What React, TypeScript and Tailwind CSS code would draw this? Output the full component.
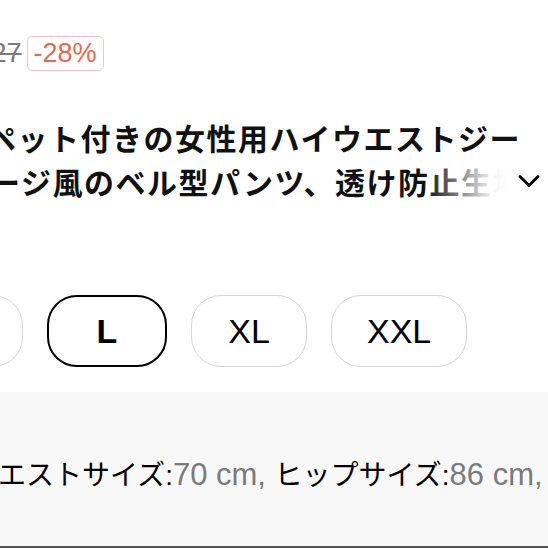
import { ChevronDown } from "lucide-react";

const sizes = [
  { label: "M", active: false },
  { label: "L", active: true },
  { label: "XL", active: false },
  { label: "XXL", active: false },
];

export default function App() {
  return (
    <div className="flex h-[548px] w-[548px] flex-col overflow-hidden bg-white font-['Liberation_Sans','Noto_Sans_CJK_JP',sans-serif] text-black">
      {/* price row */}
      <div className="mt-[36px] flex h-[35px] items-center">
        <span className="-ml-[31px] text-[27px] leading-none text-[#7b7b7b] line-through">1.27</span>
        <span className="ml-[5px] flex h-[35px] items-center rounded-[5px] border border-[#f1c6bd] px-[6px] text-[27px] leading-none text-[#e26a52]">
          -28%
        </span>
      </div>

      {/* title */}
      <div className="mt-[44px] font-['Noto_Sans_CJK_JP',sans-serif] text-[30px] font-bold leading-[44px] tracking-[1.5px] text-[#111]">
        <div className="-ml-[14px] whitespace-nowrap">ペット付きの女性用ハイウエストジー</div>
        <div className="flex h-[44px] items-center">
          <div className="relative w-[508px] overflow-hidden whitespace-nowrap">
            <span className="-ml-[10px] inline-block">ージ風のベル型パンツ、透け防止生地・</span>
            <div className="absolute inset-y-0 right-0 w-[82px] bg-gradient-to-r from-white/0 via-white/95 via-80% to-white" />
          </div>
          <ChevronDown className="ml-[3px] h-[36px] w-[36px] shrink-0 text-black" strokeWidth={1.9} />
        </div>
      </div>

      {/* sizes */}
      <div className="-ml-[93px] mt-[92px] flex gap-[24px]">
        {sizes.map((s) => (
          <div
            key={s.label}
            className={
              s.active
                ? "flex h-[72px] min-w-[120px] items-center justify-center rounded-[30px] border-2 border-black px-[35px] text-[34px] font-bold"
                : "flex h-[72px] min-w-[116px] items-center justify-center rounded-[30px] border border-[#d6d6d6] px-[35px] text-[34px]"
            }
          >
            {s.label}
          </div>
        ))}
      </div>

      {/* spec */}
      <div className="mt-[25px] flex-1 bg-[#f8f8f8] pt-[63px]">
        <div className="-ml-[30px] whitespace-nowrap text-[28px] leading-[40px]">
          <span>ウエストサイズ:</span>
          <span className="text-[31px] text-[#7b7b7b]">70 cm, </span>
          <span>ヒップサイズ:</span>
          <span className="text-[31px] text-[#7b7b7b]">86 cm, </span>
        </div>
      </div>
      <div className="h-[2px] bg-[#555]" />
    </div>
  );
}
